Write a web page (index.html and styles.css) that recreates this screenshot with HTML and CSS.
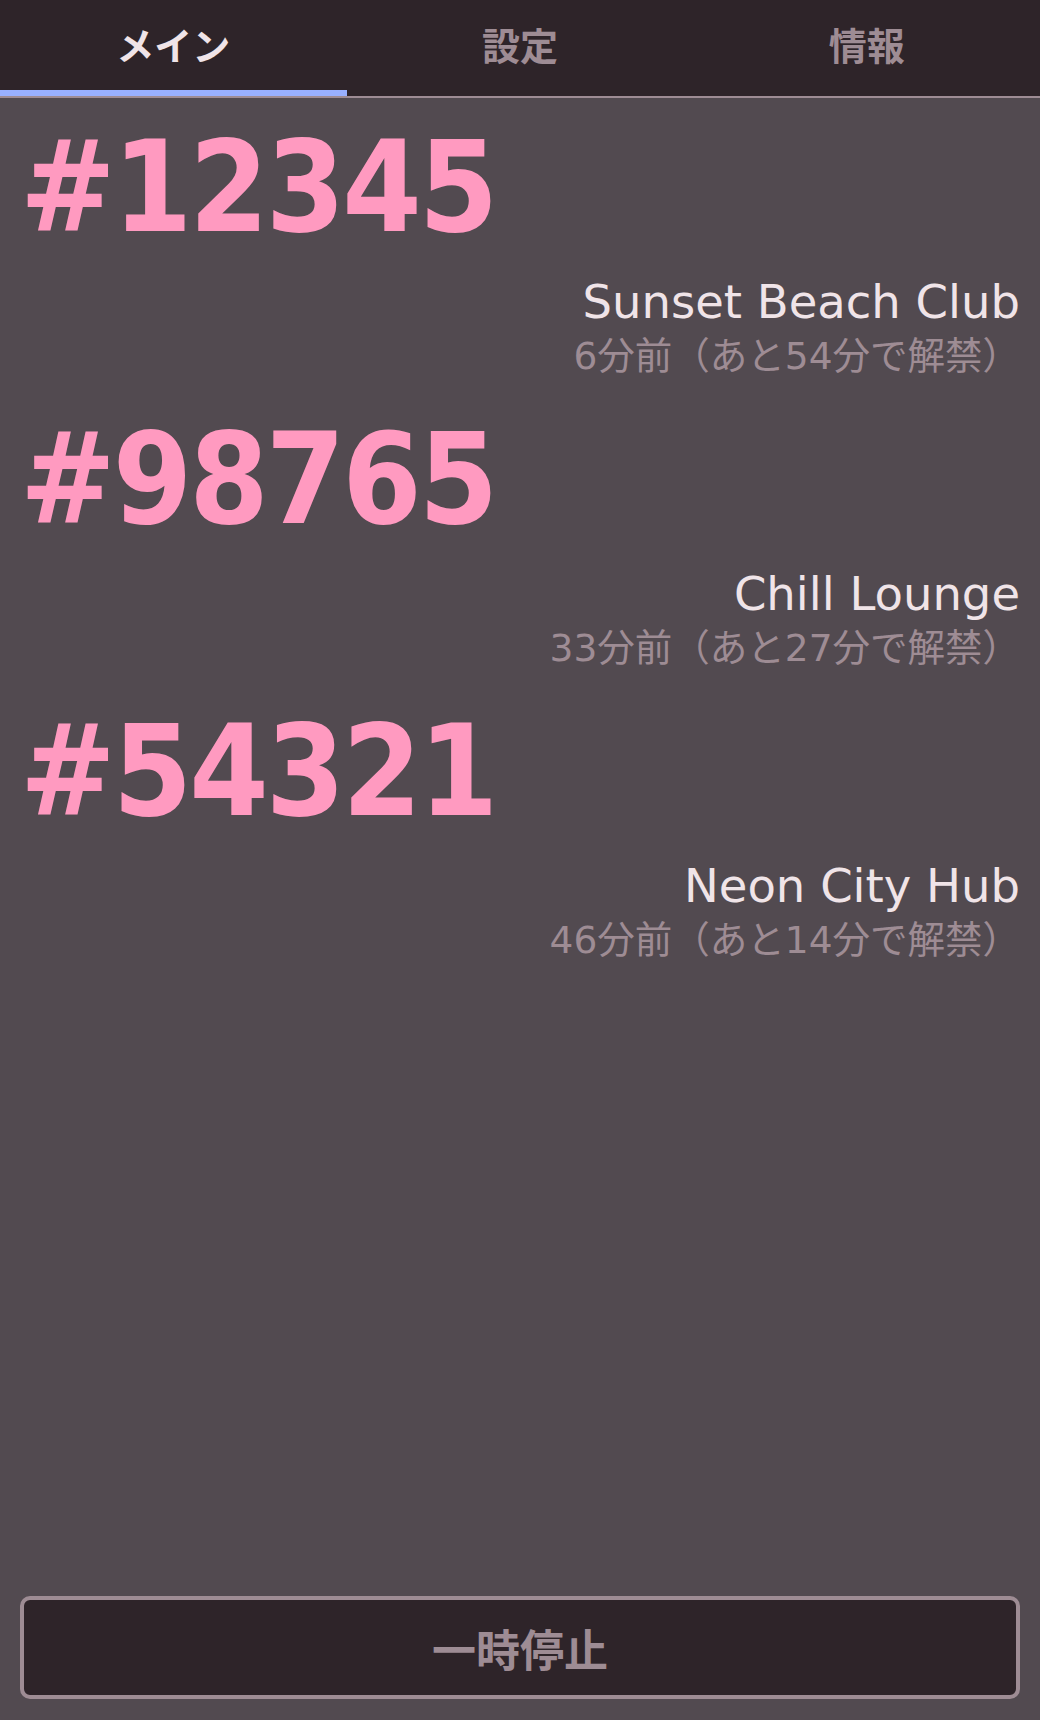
FILE: index.html
```html
<!DOCTYPE html>
<html lang="ja">
<head>
<meta charset="utf-8">
<title>メイン</title>
<link rel="stylesheet" href="styles.css">
</head>
<body>
<div class="app">
  <nav class="tabs">
    <div class="tab active">メイン</div>
    <div class="tab">設定</div>
    <div class="tab">情報</div>
  </nav>
  <main class="list">
    <section class="entry">
      <div class="num">#12345</div>
      <div class="name">Sunset Beach Club</div>
      <div class="meta">6分前（あと54分で解禁）</div>
    </section>
    <section class="entry">
      <div class="num">#98765</div>
      <div class="name">Chill Lounge</div>
      <div class="meta">33分前（あと27分で解禁）</div>
    </section>
    <section class="entry">
      <div class="num">#54321</div>
      <div class="name">Neon City Hub</div>
      <div class="meta">46分前（あと14分で解禁）</div>
    </section>
  </main>
  <div class="footer">
    <button class="pause">一時停止</button>
  </div>
</div>
</body>
</html>
```
FILE: styles.css
```css
html, body {
  margin: 0;
  padding: 0;
  background: #524a50;
}
body {
  font-family: "DejaVu Sans", "Noto Sans CJK JP", sans-serif;
}
.app {
  height: 1720px;
  display: flex;
  flex-direction: column;
}
.tabs {
  display: flex;
  background: #2e2429;
  border-bottom: 2px solid #9e8c94;
}
.tab {
  flex: 1;
  height: 96px;
  box-sizing: border-box;
  display: flex;
  align-items: center;
  justify-content: center;
  font-family: "Noto Sans CJK JP", sans-serif;
  font-size: 38px;
  font-weight: 700;
  color: #9e8c94;
  padding-bottom: 10px;
}
.tab.active {
  color: #f0e4e8;
  border-bottom: 6px solid #99b0ff;
  padding-bottom: 4px;
}
.list {
  flex: 1;
  padding: 25px 20px 0;
  display: flex;
  flex-direction: column;
  gap: 37px;
}
.entry {
  display: flex;
  flex-direction: column;
}
.num {
  font-family: "DejaVu Sans Condensed", "DejaVu Sans", sans-serif;
  font-stretch: condensed;
  font-size: 127px;
  font-weight: 700;
  letter-spacing: -3px;
  color: #ff9ac0;
  line-height: 129px;
  align-self: flex-start;
}
.name {
  align-self: flex-end;
  font-size: 46.5px;
  color: #f0e4e8;
  line-height: 56px;
  margin-top: 22px;
}
.meta {
  align-self: flex-end;
  font-size: 37.5px;
  color: #9e8c94;
  line-height: 44px;
  margin-top: 4px;
}
.footer {
  padding: 0 20px 21px;
}
.pause {
  display: block;
  width: 100%;
  height: 103px;
  box-sizing: border-box;
  background: #2e2429;
  border: 4px solid #9e8c94;
  border-radius: 10px;
  color: #9e8c94;
  font-family: "Noto Sans CJK JP", sans-serif;
  font-size: 44px;
  font-weight: 700;
  padding: 0;
}
```
